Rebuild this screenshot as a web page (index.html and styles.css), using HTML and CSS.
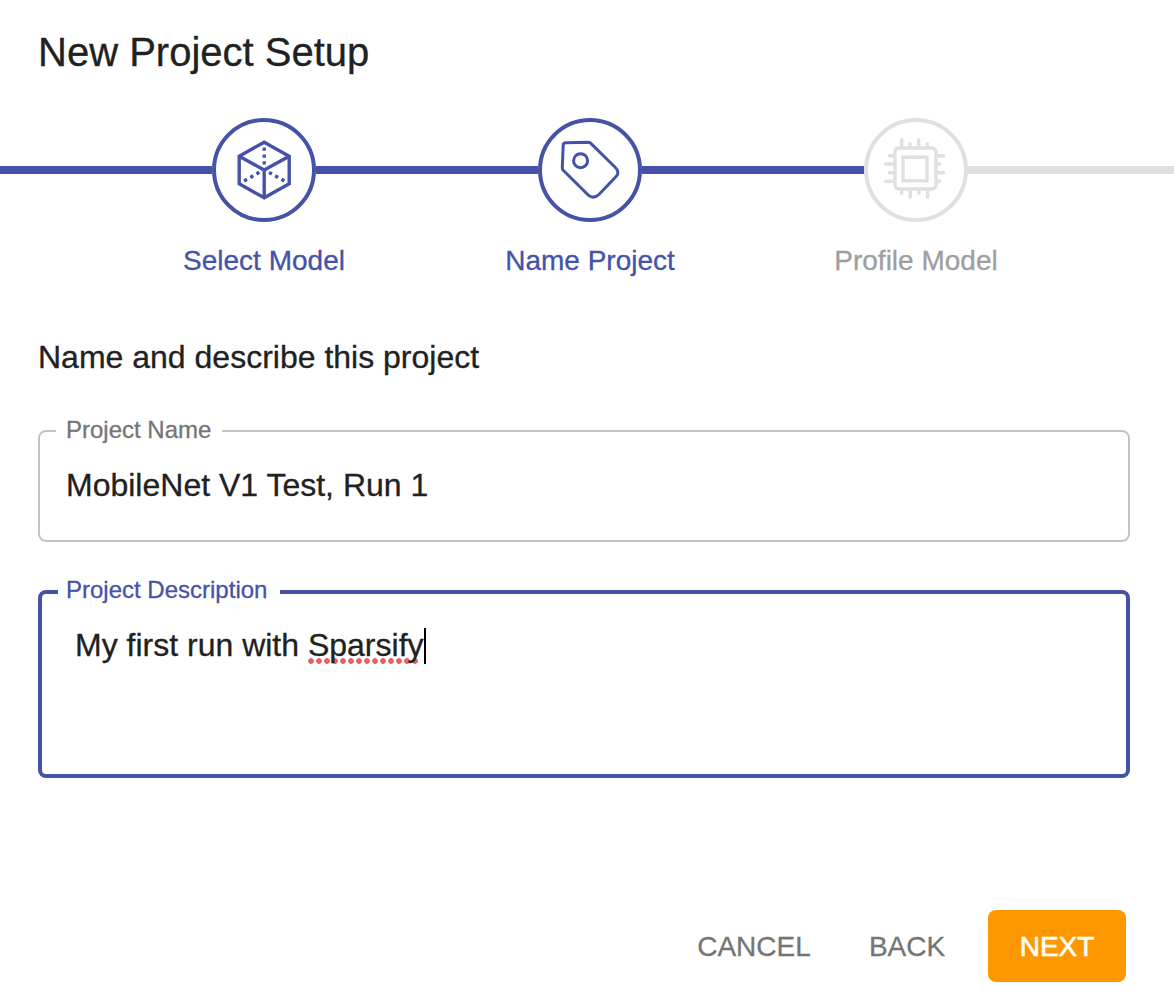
FILE: index.html
```html
<!DOCTYPE html>
<html lang="en">
<head>
<meta charset="utf-8">
<title>New Project Setup</title>
<link rel="stylesheet" href="styles.css">
</head>
<body>
<main class="dialog">
  <h1 class="title">New Project Setup</h1>
  <div class="rail">
    <span class="line line-lead"></span>
    <span class="circle">
      <svg viewBox="0 0 96 96" class="icon">
        <g transform="translate(-4 -4)">
          <path d="M52.2 24.2 77.2 38.2V65.8L52.2 79.8 27.2 65.8V38.2ZM27.2 38.2 52.2 52 77.2 38.2M52.2 52V79.8"/>
          <path class="dots" d="M50.6 29.4h3.3v3.3h-3.3zM50.6 36.4h3.3v3.3h-3.3zM50.6 43.3h3.3v3.3h-3.3zM31.2 61.5l2.9-1.7 1.7 2.9-2.9 1.7zM37.5 58l2.9-1.7 1.7 2.9-2.9 1.7zM43.6 54.5l2.9-1.7 1.7 2.9-2.9 1.7zM57.9 52.9l2.9 1.7-1.7 2.9-2.9-1.7zM64 56.3l2.9 1.7-1.7 2.9-2.9-1.7zM70.3 59.8l2.9 1.7-1.7 2.9-2.9-1.7z"/>
        </g>
      </svg>
    </span>
    <span class="line"></span>
    <span class="circle">
      <svg viewBox="0 0 96 96" class="icon icon-tag">
        <g transform="translate(-4.4 -4)">
          <path d="M28.3 24.8 50.4 24.3Q52 24.3 53.2 25.4L77.3 49Q82.8 54.2 78.3 58.8L61.3 76.500Q56 81.500 50.300 76.800L25.600 52.300Q24.600 51.300 24.700 49.600L25.600 27Q25.800 24.900 28.300 24.800Z"/>
          <circle cx="43" cy="42.7" r="7"/>
        </g>
      </svg>
    </span>
    <span class="line"></span>
    <span class="circle circle-off">
      <svg viewBox="0 0 96 96" class="icon icon-chip">
        <g transform="translate(-4 -4)">
          <rect x="31" y="30" width="41" height="41" rx="4"/>
          <rect x="39" y="39.2" width="24" height="23.6"/>
          <path d="M37.7 29V21.7M46 29V25.7M54.7 29V21.7M63.3 29V25.7M37.7 72V75.3M46.3 72V79.3M55 72V75.3M63.7 72V79.3M30 37.7H25.3M30 46H21.7M30 54.7H25.3M30 63.3H21.7M73 37.7H79.7M73 46H75.7M73 54.7H79.7M73 63.3H75.7"/>
        </g>
      </svg>
    </span>
    <span class="line line-off"></span>
  </div>
  <div class="labels">
    <span>Select Model</span>
    <span>Name Project</span>
    <span class="label-off">Profile Model</span>
  </div>
  <h2 class="subtitle">Name and describe this project</h2>
  <fieldset class="field">
    <legend>Project Name</legend>
    <div class="value">MobileNet V1 Test, Run 1</div>
  </fieldset>
  <fieldset class="field field-focus">
    <legend>Project Description</legend>
    <div class="value">My first run with <span class="misspelt">Sparsify</span><span class="caret"></span></div>
  </fieldset>
  <div class="actions">
    <button class="btn btn-cancel">CANCEL</button>
    <button class="btn btn-back">BACK</button>
    <button class="btn btn-next">NEXT</button>
  </div>
</main>
</body>
</html>
```
FILE: styles.css
```css
* { box-sizing: border-box; }
body {
  margin: 0;
  background: #fff;
  color: #212121;
  font-family: "Liberation Sans", Arial, sans-serif;
  -webkit-text-stroke: 0.3px currentColor;
}
.dialog { height: 1000px; overflow: hidden; display: flex; flex-direction: column; }
.title {
  margin: 20px 38px 0;
  font-size: 40px;
  font-weight: 400;
  line-height: 64px;
}
.rail { display: flex; align-items: center; height: 104px; margin-top: 34px; }
.line { width: 222px; height: 8px; background: #4652a8; }
.line-lead { width: 212px; }
.line-off { flex: 1; background: #e0e0e0; }
.circle {
  width: 104px;
  height: 104px;
  border: 4px solid #4652a8;
  border-radius: 50%;
  color: #4652a8;
}
.circle-off { border-color: #e0e0e0; color: #e0e0e0; }
.icon { display: block; width: 96px; height: 96px; fill: none; stroke: currentColor; stroke-width: 3.4; }
.icon-tag { stroke-width: 3; stroke-linejoin: round; }
.icon-chip { stroke-width: 3.4; stroke-linecap: round; }
.dots { fill: currentColor; stroke: none; }
.labels {
  display: grid;
  grid-template-columns: repeat(3, 326px);
  padding-left: 101px;
  margin-top: 19px;
  color: #4652a8;
  font-size: 28px;
  line-height: 40px;
  text-align: center;
}
.label-off { color: #9e9e9e; }
.subtitle {
  margin: 56px 38px 0;
  font-size: 32px;
  font-weight: 400;
  line-height: 40px;
}
.field {
  width: 1092px;
  height: 124px;
  margin: 41px 0 0 38px;
  padding: 0 26px 0 16px;
  border: 2px solid #c4c4c4;
  border-radius: 8px;
}
.field legend {
  padding: 0 11px 2px 10px;
  color: #757575;
  font-size: 24px;
  line-height: 24px;
}
.field .value {
  padding: 22px 0 0 10px;
  font-size: 32px;
  line-height: 38px;
  white-space: nowrap;
}
.field-focus { height: 200px; margin-top: 36px; padding-left: 16px; border: 4px solid #4652a8; }
.field-focus legend { color: #4652a8; padding: 0 13px 4px 8px; }
.field-focus .value { display: flex; white-space: pre; padding: 20px 0 0 17px; }
.misspelt {
  width: 111px;
  background: radial-gradient(circle at 3px 3px, #e8606a 2.5px, transparent 3.2px) 0 32px / 8px 6px repeat-x;
}
.caret { width: 2px; height: 36px; margin: 2px 0 0 5px; background: #000; }
.actions { display: flex; margin-top: 132px; padding-right: 48px; justify-content: flex-end; }
.btn {
  height: 72px;
  padding: 2px 0 0;
  border: 0;
  border-radius: 8px;
  background: none;
  color: #757575;
  font: 28px "Liberation Sans", Arial, sans-serif;
  -webkit-text-stroke: 0.3px currentColor;
}
.btn-cancel { width: 114px; margin-right: 57px; }
.btn-back { width: 78px; margin-right: 42px; }
.btn-next { width: 138px; background: #ff9800; color: #fff; -webkit-text-stroke-width: 0.6px; }
```
